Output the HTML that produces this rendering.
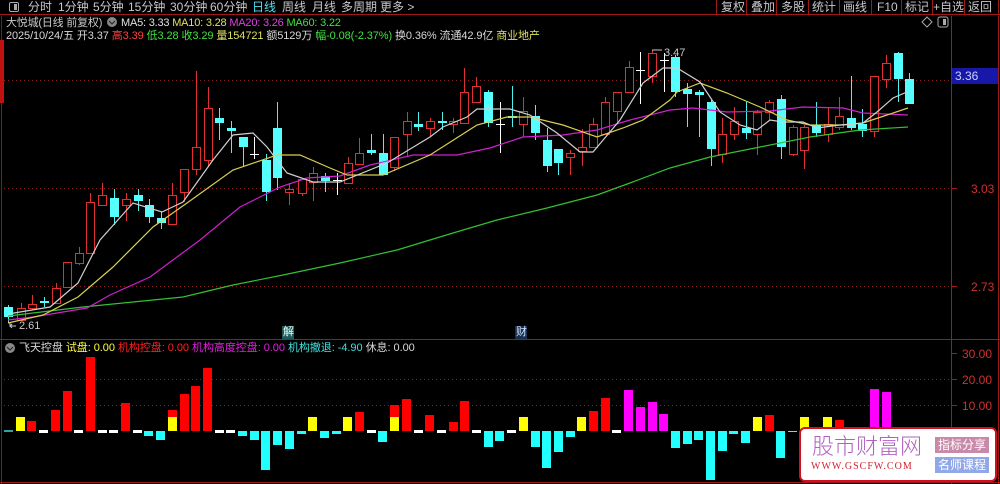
<!DOCTYPE html>
<html><head><meta charset="utf-8">
<style>
*{margin:0;padding:0;box-sizing:border-box}
body{width:1000px;height:484px;background:#000;overflow:hidden;position:relative;font-family:"Liberation Sans","Noto Sans CJK SC",sans-serif;font-size:12px;color:#c8c8c8}
.t{position:absolute;white-space:nowrap;line-height:14px}
#tb{position:absolute;left:0;top:0;width:1000px;height:15px;border-bottom:1px solid #a01818}
#tb span{position:absolute;top:0;line-height:14px;font-size:12px;color:#c8c8c8}
.rb{position:absolute;top:0;height:15px;border-left:1px solid #a01818}
svg{position:absolute;left:0;top:0}
</style></head><body>
<div id="tb">
<div style="position:absolute;left:9px;top:2px;width:10px;height:10px;border:1px solid #aaa;border-radius:2px"></div>
<div style="position:absolute;left:14px;top:4px;width:3px;height:6px;background:#aaa"></div>
<span style="left:28px">分时</span><span style="left:58px">1分钟</span><span style="left:93px">5分钟</span><span style="left:128px">15分钟</span><span style="left:170px">30分钟</span><span style="left:210px">60分钟</span><span style="left:252px;color:#4fe0f0">日线</span><span style="left:282px">周线</span><span style="left:312px">月线</span><span style="left:341px">多周期</span><span style="left:380px">更多 &gt;</span>
<div class="rb" style="left:716px"></div><span style="left:721px">复权</span>
<div class="rb" style="left:746px"></div><span style="left:751px">叠加</span>
<div class="rb" style="left:776px"></div><span style="left:781px">多股</span>
<div class="rb" style="left:808px"></div><span style="left:812px">统计</span>
<div class="rb" style="left:839px"></div><span style="left:843px">画线</span>
<div class="rb" style="left:871px"></div><span style="left:877px">F10</span>
<div class="rb" style="left:901px"></div><span style="left:905px">标记</span>
<div class="rb" style="left:932px"></div><span style="left:933px">+自选</span>
<div class="rb" style="left:964px"></div><span style="left:968px">返回</span>
<div class="rb" style="left:998px"></div>
</div>

<svg width="1000" height="484" id="ch">
<g stroke="#8a2020" stroke-dasharray="1,3" stroke-width="1">
<line x1="4" y1="80.5" x2="951" y2="80.5"/><line x1="4" y1="188.5" x2="951" y2="188.5"/><line x1="4" y1="286.5" x2="951" y2="286.5"/>
<line x1="4" y1="379.5" x2="951" y2="379.5"/><line x1="4" y1="405.5" x2="951" y2="405.5"/>
</g>
<line x1="951.5" y1="16" x2="951.5" y2="484" stroke="#a01818"/>
<line x1="998.5" y1="16" x2="998.5" y2="484" stroke="#a01818"/>
<line x1="1.5" y1="16" x2="1.5" y2="484" stroke="#801818"/>
<rect x="0" y="40" width="4" height="63" fill="#c01010"/>
<line x1="0" y1="339.5" x2="1000" y2="339.5" stroke="#a01818"/>
<line x1="0" y1="482.5" x2="1000" y2="482.5" stroke="#a01818"/>
<g stroke="#a01818"><line x1="951" y1="188.5" x2="957" y2="188.5"/><line x1="951" y1="286.5" x2="957" y2="286.5"/><line x1="951" y1="353.5" x2="957" y2="353.5"/><line x1="951" y1="379.5" x2="957" y2="379.5"/><line x1="951" y1="405.5" x2="957" y2="405.5"/><line x1="951" y1="431.5" x2="957" y2="431.5"/></g>
<g id="cd"></g>
<g fill="none" stroke-width="1.2">
<polyline stroke="#33c033" points="8,316 83,307 133,302 183,297 233,285 283,275 340,263 397,250 453,233 497,220 547,208 597,195 630,183 670,168 710,157 760,147 810,137 860,130 908,127"/>
<polyline stroke="#d020d0" points="8,320 33,317 87,308 110,295 150,277 200,240 240,207 280,187 307,178 340,176 370,165 413,155 457,155 490,148 523,137 563,135 597,130 630,120 670,110 693,108 727,112 770,111 803,107 843,108 863,113 908,115"/>
<polyline stroke="#d8d050" points="8,323 43,315 78,297 113,267 153,227 187,203 233,170 277,155 300,155 330,168 347,175 383,175 430,155 477,125 507,117 530,117 563,125 597,137 623,128 643,120 670,100 677,92 700,83 727,93 760,107 787,120 810,125 843,125 863,123 887,115 908,108"/>
<polyline stroke="#d0d0d0" points="8,314 50,307 78,283 100,240 133,203 162,212 183,202 213,160 233,135 253,133 267,147 287,173 313,182 340,182 387,163 430,137 443,127 467,117 477,109 510,109 530,115 557,133 580,152 593,152 620,120 643,83 663,68 677,68 700,82 720,112 740,125 757,130 770,120 783,122 803,122 817,128 840,125 863,123 877,112 893,98 907,92"/>
</g>
<g id="bars"></g>
<g fill="#ffffff" font-size="11" font-family="Liberation Sans,sans-serif">
<text x="19" y="329" fill="#c8c8c8">2.61</text>
<text x="664" y="56" fill="#c8c8c8">3.47</text>
</g>
<path d="M10 323 L10 326 L16 326 M12 324 L10 326 L12 328" stroke="#c8c8c8" fill="none"/>
<path d="M652 50 L662 50" stroke="#c8c8c8"/>
<rect x="952" y="68" width="46" height="16" fill="#1818a8"/>
<text x="955" y="80" fill="#c8d0ff" font-size="12" font-family="Liberation Sans,sans-serif">3.36</text>
<g fill="#d03030" font-size="12" font-family="Liberation Sans,sans-serif">
<text x="971" y="193">3.03</text><text x="971" y="291">2.73</text>
<text x="962" y="358">30.00</text><text x="962" y="384">20.00</text><text x="962" y="410">10.00</text>
</g>
<path d="M927 17 L932 22 L927 27 L922 22 Z" stroke="#aaa" fill="none"/>
<rect x="938" y="17" width="10" height="10" rx="2" stroke="#aaa" fill="none"/><rect x="943" y="19" width="3" height="6" fill="#aaa"/>
<circle cx="112" cy="22" r="5" fill="#888"/><path d="M109 21 L112 24 L115 21" stroke="#222" fill="none"/>
<circle cx="10" cy="348" r="5" fill="#888"/><path d="M7 347 L10 350 L13 347" stroke="#222" fill="none"/>
<rect x="282" y="326" width="12" height="13" fill="#205858"/>
<rect x="515" y="326" width="12" height="13" fill="#1a3050"/>
</svg>

<div class="t" style="left:283px;top:325px;color:#e0ffff;font-size:11px">解</div>
<div class="t" style="left:516px;top:325px;color:#d0e0ff;font-size:11px">财</div>

<div class="t" style="left:6px;top:16px;font-size:11px;letter-spacing:-0.2px">大悦城(日线 前复权)</div>
<div class="t" style="left:121px;top:16px;font-size:11px;letter-spacing:-0.2px"><span style="color:#e0e0e0">MA5: 3.33</span> <span style="color:#e0e060">MA10: 3.28</span> <span style="color:#e040e0">MA20: 3.26</span> <span style="color:#40e040">MA60: 3.22</span></div>
<div class="t" style="left:6px;top:29px;font-size:11px;letter-spacing:-0.1px;color:#d8d8d8">2025/10/24/五 开3.37 <span style="color:#ff4040">高3.39</span> <span style="color:#40e040">低3.28 收3.29</span> <span style="color:#e0e060">量154721</span> 额5129万 <span style="color:#40e040">幅-0.08(-2.37%)</span> 换0.36% 流通42.9亿 <span style="color:#e0e060">商业地产</span></div>
<div class="t" style="left:19px;top:341px;font-size:11px;letter-spacing:-0.05px;color:#d8d8d8">飞天控盘 <span style="color:#ffff40">试盘: 0.00</span> <span style="color:#ff2020">机构控盘: 0.00</span> <span style="color:#e020e0">机构高度控盘: 0.00</span> <span style="color:#40e0e0">机构撤退: -4.90</span> 休息: 0.00</div>

<div style="position:absolute;left:799px;top:427px;width:198px;height:55px;background:#fff;border:2px solid #d01020;border-radius:6px"></div>
<div class="t" style="left:812px;top:432px;font-size:22px;line-height:26px;color:#b060c0;font-family:'Noto Sans CJK SC',sans-serif;font-weight:300">股市财富网</div>
<div class="t" style="left:811px;top:460px;font-size:10px;color:#d02030;font-family:'Liberation Serif',serif;letter-spacing:1px">WWW.GSCFW.COM</div>
<div class="t" style="left:935px;top:437px;width:54px;height:16px;background:#c88aa8;color:#fff;font-size:12px;line-height:16px;text-align:center">指标分享</div>
<div class="t" style="left:935px;top:457px;width:54px;height:16px;background:#90a8e8;color:#fff;font-size:12px;line-height:16px;text-align:center">名师课程</div>

<script>
var C=[[8,'c',307,317,305,323],[21,'r',308,320,303,320],[32,'r',304,308,295,310],[44,'c',301,303,297,307],[56,'r',288,303,283,303],[67,'r',262,287,262,287],[79,'r',253,263,247,265],[90,'r',202,253,193,253],[102,'r',195,205,183,205],[114,'c',198,217,189,225],[126,'r',199,205,193,221],[138,'c',195,201,189,211],[149,'c',205,217,199,223],[161,'c',218,223,212,229],[172,'r',195,224,183,224],[184,'r',169,192,169,202],[196,'r',147,169,71,175],[208,'r',108,160,87,166],[219,'c',118,123,108,140],[231,'c',128,131,121,153],[243,'c',137,147,137,166],[254,'w',154,154,137,159],[266,'c',160,192,154,201],[277,'c',128,178,102,190],[289,'r',189,192,183,205],[302,'r',179,193,179,196],[313,'r',173,182,167,201],[325,'c',176,181,173,192],[337,'w',180,180,173,195],[348,'r',163,183,157,183],[359,'r',153,164,138,164],[371,'c',150,153,134,155],[383,'c',153,175,134,175],[394,'r',137,167,137,171],[407,'r',121,134,112,157],[418,'c',124,127,112,131],[430,'r',121,128,118,137],[442,'c',121,123,112,130],[453,'r',121,124,118,133],[464,'r',92,123,68,123],[476,'r',86,102,77,102],[488,'c',92,123,90,127],[500,'w',124,124,102,153],[512,'c',116,118,86,127],[523,'r',111,124,97,137],[535,'c',116,133,105,140],[547,'c',140,166,128,172],[558,'c',149,163,149,175],[570,'r',153,157,150,175],[582,'r',147,151,129,166],[593,'r',124,147,118,147],[605,'r',102,134,97,134],[617,'r',92,111,92,123],[629,'r',67,92,61,92],[640,'w',70,70,52,104],[652,'r',53,76,50,83],[664,'w',60,60,53,92],[675,'c',57,92,55,97],[687,'c',89,94,83,127],[699,'c',92,95,90,137],[711,'c',102,149,100,166],[722,'r',134,154,118,163],[734,'r',121,134,107,140],[746,'c',128,133,102,139],[757,'r',112,134,110,155],[769,'r',102,112,100,120],[781,'c',99,147,95,159],[793,'r',127,154,125,156],[804,'r',127,150,125,169],[816,'c',125,133,102,137],[828,'r',124,134,107,142],[839,'r',116,127,97,130],[851,'c',118,128,76,130],[862,'c',124,131,109,137],[874,'r',76,131,76,137],[886,'r',63,79,55,88],[898,'c',53,79,52,102],[909,'c',79,104,73,104]];
var s='';
C.forEach(function(d){var x=d[0],t=d[1],a=d[2],b=d[3],h=d[4],l=d[5];
if(t=='r'){s+='<line x1="'+(x+.5)+'" y1="'+h+'" x2="'+(x+.5)+'" y2="'+a+'" stroke="#e03030"/><line x1="'+(x+.5)+'" y1="'+b+'" x2="'+(x+.5)+'" y2="'+l+'" stroke="#e03030"/><rect x="'+(x-3.5)+'" y="'+(a+.5)+'" width="8" height="'+Math.max(b-a,1)+'" fill="#000" stroke="#e03030"/>';}
else if(t=='c'){s+='<line x1="'+(x+.5)+'" y1="'+h+'" x2="'+(x+.5)+'" y2="'+l+'" stroke="#50f0f0"/><rect x="'+(x-4)+'" y="'+a+'" width="9" height="'+Math.max(b-a,2)+'" fill="#55ffff"/>';}
else{s+='<line x1="'+(x+.5)+'" y1="'+h+'" x2="'+(x+.5)+'" y2="'+l+'" stroke="#fff"/><line x1="'+(x-4)+'" y1="'+(a+.5)+'" x2="'+(x+5)+'" y2="'+(a+.5)+'" stroke="#fff"/>';}});
document.getElementById('cd').innerHTML=s;
var B=[['T'],['Y',417],['R',421],['W'],['R',410],['R',391],['W'],['R',357],['W'],['W'],['R',403],['W'],['C',436],['C',440],['RY',410],['R',394],['R',386],['R',368],['W'],['W'],['C',436],['C',440],['C',470],['C',445],['C',449],['C',434],['Y',417],['C',438],['C',434],['Y',417],['R',412],['W'],['C',442],['RY',405],['R',399],['W'],['R',415],['W'],['R',422],['R',401],['W'],['C',447],['C',441],['W'],['Y',417],['C',447],['C',468],['C',452],['C',437],['Y',417],['R',411],['R',398],['W'],['M',390],['M',407],['M',402],['M',414],['C',448],['C',444],['C',440],['C',480],['C',451],['C',434],['C',443],['Y',417],['R',415],['C',458],['C',432],['Y',417],['C',434],['Y',417],['R',420],['C',440],['W'],['M',389],['M',392],['C',440],['C',440]];
var z=431,q='';
B.forEach(function(d,i){var x=Math.round(8+i*11.7)-4,t=d[0],v=d[1];
if(t=='T')q+='<rect x="'+x+'" y="430" width="9" height="2" fill="#30a0a0"/>';
else if(t=='W')q+='<rect x="'+x+'" y="430" width="9" height="3" fill="#fff"/>';
else if(t=='C')q+='<rect x="'+x+'" y="'+z+'" width="9" height="'+(v-z)+'" fill="#22ffff"/>';
else if(t=='Y')q+='<rect x="'+x+'" y="'+v+'" width="9" height="'+(z-v)+'" fill="#ffff00"/>';
else if(t=='R')q+='<rect x="'+x+'" y="'+v+'" width="9" height="'+(z-v)+'" fill="#ff0000"/>';
else if(t=='M')q+='<rect x="'+x+'" y="'+v+'" width="9" height="'+(z-v)+'" fill="#ff00ff"/>';
else if(t=='RY')q+='<rect x="'+x+'" y="'+v+'" width="9" height="'+(z-v)+'" fill="#ff0000"/><rect x="'+x+'" y="417" width="9" height="'+(z-417)+'" fill="#ffff00"/>';});
document.getElementById('bars').innerHTML=q;
</script>
</body></html>
